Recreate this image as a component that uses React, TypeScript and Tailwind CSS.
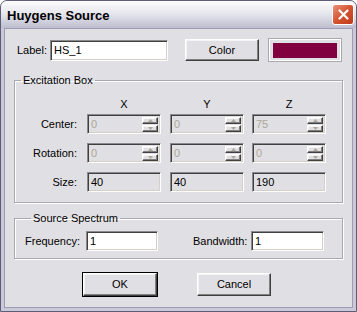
const font = "font-['Liberation_Sans',Arial,sans-serif]"
const sunken =
  'border border-t-[#8a8a8a] border-l-[#8a8a8a] border-b-white border-r-white shadow-[inset_1px_1px_0_#404040,inset_-1px_-1px_0_#d4d0c8]'
const raised =
  'border border-t-white border-l-white border-b-[#404040] border-r-[#404040] shadow-[inset_-1px_-1px_0_#808080,inset_1px_1px_0_#f4f4f4] bg-[#e0dfe3]'

function TextBox({ value, className = '', disabled = false, readOnly = false, spin = false }: { value: string; className?: string; disabled?: boolean; readOnly?: boolean; spin?: boolean }) {
  const look = disabled ? 'bg-[#e0dfe3] text-[#aca899]' : readOnly ? 'bg-[#e0dfe3] text-black' : 'bg-white text-black'
  return (
    <div className={`${sunken} ${look} h-[20px] flex items-center pl-[3px] pr-[2px] ${className}`}>
      <span className="flex-1 leading-none">{value}</span>
      {spin && (
        <div className="flex flex-col gap-[1px]">
          <SpinBtn up />
          <SpinBtn />
        </div>
      )}
    </div>
  )
}

function SpinBtn({ up = false }: { up?: boolean }) {
  return (
    <div className={`${raised} w-[16px] h-[7px] flex items-center justify-center`}>
      <svg width="5" height="3" viewBox="0 0 5 3">
        {up ? <path d="M2.5 0L5 3H0z" fill="#aca899" /> : <path d="M0 0h5L2.5 3z" fill="#aca899" />}
      </svg>
    </div>
  )
}

function Button({ children, def = false, className = '' }: { children: React.ReactNode; def?: boolean; className?: string }) {
  return (
    <div className={`${def ? 'outline outline-1 outline-black' : ''} ${className}`}>
      <div className={`${raised} w-full h-full flex items-center justify-center text-black`}>{children}</div>
    </div>
  )
}

export default function App() {
  const rows: { label: string; vals: string[]; disabled: boolean }[] = [
    { label: 'Center:', vals: ['0', '0', '75'], disabled: true },
    { label: 'Rotation:', vals: ['0', '0', '0'], disabled: true },
    { label: 'Size:', vals: ['40', '40', '190'], disabled: false },
  ]
  return (
    <div className={`${font} text-[11px] w-[357px] h-[312px] rounded-t-[7px] border border-[#5d5d78] bg-[#c9c9d8] flex flex-col overflow-hidden`}>
      {/* title bar */}
      <div className="h-[27px] shrink-0 flex items-center pl-[6px] pr-[2px] bg-gradient-to-b from-[#fdfdfe] via-[#e4e4ec] to-[#bdbdcf]">
        <span className="flex-1 text-[13px] font-bold text-black leading-none mt-[1px]">Huygens Source</span>
        <div className="w-[22px] h-[21px] rounded-[3px] border border-white bg-gradient-to-br from-[#e9907a] via-[#d5532f] to-[#c03a1c] flex items-center justify-center">
          <svg width="11" height="11" viewBox="0 0 11 11">
            <path d="M1.5 1.5L9.5 9.5M9.5 1.5L1.5 9.5" stroke="white" strokeWidth="2.2" strokeLinecap="round" />
          </svg>
        </div>
      </div>

      {/* body */}
      <div className="flex-1 mx-[3px] mb-[3px] bg-[#e0dfe3] border border-[#9c9cb4] pt-[9px]">
        <div className="flex items-center h-[24px] pl-[12px]">
          <span className="w-[33px]">Label:</span>
          <TextBox value="HS_1" className="w-[118px] h-[21px]" />
          <Button className="ml-[17px] w-[74px] h-[22px]">Color</Button>
          <div className="ml-[9px] w-[74px] h-[24px] border border-[#a9a9ad] shadow-[inset_1px_1px_0_white,inset_-1px_-1px_0_white] flex items-center justify-center">
            <div className="w-[64px] h-[15px] bg-[#800040]" />
          </div>
        </div>

        <fieldset className="mx-[9px] mt-[12px] border border-[#a8a8b0] shadow-[inset_1px_1px_0_white,1px_1px_0_white] pt-[11px] pb-[10px]">
          <legend className="ml-[6px] px-[2px] leading-[13px]">Excitation Box</legend>
          <div className="flex leading-[13px] mb-[3px] pl-[72px]">
            <span className="w-[74px] text-center">X</span>
            <span className="w-[74px] ml-[9px] text-center">Y</span>
            <span className="w-[74px] ml-[8px] text-center">Z</span>
          </div>
          {rows.map((r, i) => (
            <div key={r.label} className={`flex items-center h-[20px] ${i > 0 ? 'mt-[9px]' : ''}`}>
              <span className="w-[62px] text-right">{r.label}</span>
              <TextBox value={r.vals[0]} disabled={r.disabled} readOnly spin={r.disabled} className="ml-[10px] w-[74px]" />
              <TextBox value={r.vals[1]} disabled={r.disabled} readOnly spin={r.disabled} className="ml-[9px] w-[74px]" />
              <TextBox value={r.vals[2]} disabled={r.disabled} readOnly spin={r.disabled} className="ml-[8px] w-[74px]" />
            </div>
          ))}
        </fieldset>

        <fieldset className="mx-[9px] mt-[9px] border border-[#a8a8b0] shadow-[inset_1px_1px_0_white,1px_1px_0_white] pt-[6px] pb-[7px] pl-[10px]">
          <legend className="ml-[6px] px-[2px] leading-[13px]">Source Spectrum</legend>
          <div className="flex items-center h-[20px]">
            <span className="w-[61px]">Frequency:</span>
            <TextBox value="1" className="w-[72px]" />
            <span className="ml-[35px] w-[58px]">Bandwidth:</span>
            <TextBox value="1" className="w-[73px]" />
          </div>
        </fieldset>

        <div className="flex mt-[14px] pl-[78px] gap-[40px]">
          <Button def className="w-[74px] h-[23px]">OK</Button>
          <Button className="w-[74px] h-[23px]">Cancel</Button>
        </div>
      </div>
    </div>
  )
}
